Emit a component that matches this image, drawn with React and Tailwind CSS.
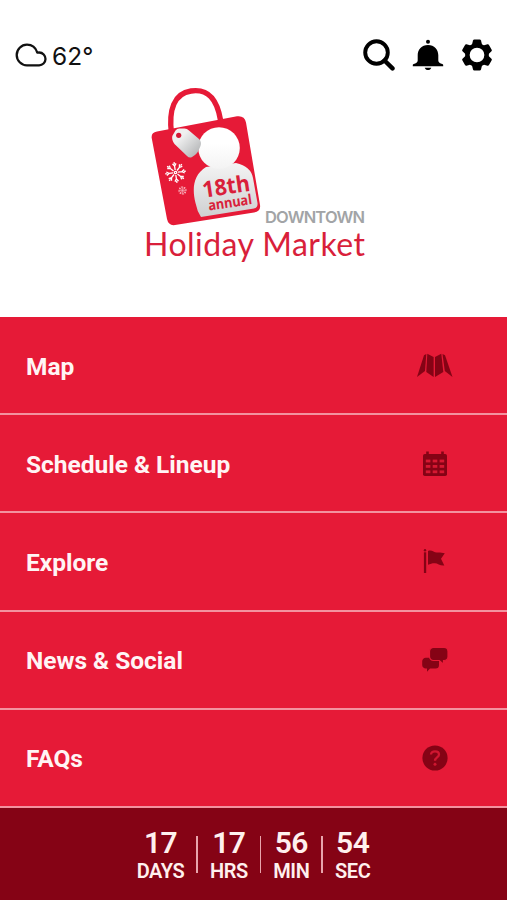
// src/App.jsx
const MENU_ITEMS = [
  { label: 'Map', icon: MapIcon },
  { label: 'Schedule & Lineup', icon: CalendarIcon },
  { label: 'Explore', icon: FlagIcon },
  { label: 'News & Social', icon: ChatIcon },
  { label: 'FAQs', icon: HelpIcon },
];

const COUNTDOWN = [
  { value: 17, unit: 'DAYS' },
  { value: 17, unit: 'HRS' },
  { value: 56, unit: 'MIN' },
  { value: 54, unit: 'SEC' },
];

const GEAR_TEETH = [0, 60, 120, 180, 240, 300];
const SNOW_ARMS = [0, 45, 90, 135, 180, 225, 270, 315];
const CELLS = [0, 1, 2];

function CloudIcon() {
  return (
    <svg className="h-6 w-8" viewBox="0 0 32 24" fill="none" stroke="#111" strokeWidth="2.3" strokeLinejoin="round">
      <path d="M12 22.3h12a6.4 6.4 0 0 0 .2-12.8c-.8 0-1.3 0-1.9.1C20.7 4.7 17 1.7 12 1.7a10.3 10.3 0 0 0 0 20.6Z" />
    </svg>
  );
}

function SearchIcon() {
  return (
    <svg className="size-8" viewBox="0 0 32 32" fill="none" stroke="#000">
      <circle cx="13.5" cy="13.5" r="11.3" strokeWidth="3.9" />
      <path d="m21.5 21.5 8 7.9" strokeWidth="4.4" strokeLinecap="round" />
    </svg>
  );
}

function BellIcon() {
  return (
    <svg className="size-8" viewBox="0 0 32 32">
      <circle cx="16" cy="2.8" r="2" />
      <path d="M16 6c6.3 0 10.3 4.3 10.3 10.3v5.2c0 2 1.8 3 4 3.6.7.2.9.7.9 1.3v.8H.8v-.8c0-.6.2-1.100.9-1.3 2.2-.6 4-1.6 4-3.6v-5.2C5.700 10.3 9.700 6 16 6Z" />
      <path d="M12.7 28.8h6.6c-.6 1.5-1.7 2.3-3.3 2.3s-2.700-.8-3.300-2.300Z" />
    </svg>
  );
}

function GearIcon() {
  return (
    <svg className="size-8" viewBox="0 0 32 32">
      {GEAR_TEETH.map((angle) => (
        <path
          key={angle}
          d="M10.5 7.5 12 1.6q.3-1 1.3-1h5.4q1 0 1.3 1L21.5 7.5Z"
          transform={`rotate(${angle} 16 16)`}
        />
      ))}
      <circle cx="16" cy="16" r="9.6" fill="none" stroke="#000" strokeWidth="4.5" />
    </svg>
  );
}

function MapIcon() {
  return (
    <svg className="h-6 w-9" viewBox="0 0 36 24" fill="#850315">
      <path d="M0 24 7 2.300 9.300 1 8 18Z" />
      <path d="m10.300.8 6.300 3.200V24L9.300 19Z" />
      <path d="M18 4 24.300.8 26.300 19 18 24Z" />
      <path d="m25.500 1 2.500 1.300L35.500 24l-7.700-6Z" />
    </svg>
  );
}

function CalendarIcon() {
  return (
    <svg className="h-[25px] w-6" viewBox="0 0 24 25">
      <rect y="3" width="24" height="22" rx="1.800" fill="#850315" />
      <path d="M4.500.5v4M19.500.5v4" stroke="#850315" strokeWidth="2.600" />
      {CELLS.map((row) =>
        CELLS.map((col) => (
          <rect
            key={`${row}-${col}`}
            x={2.8 + col * 6.9}
            y={8.6 + row * 5.4}
            width="4.600"
            height="2.800"
            fill="#d61832"
          />
        )),
      )}
    </svg>
  );
}

function FlagIcon() {
  return (
    <svg className="h-6 w-6" viewBox="0 0 24 24" fill="#850315">
      <circle cx="2" cy="1.200" r="1.200" />
      <path d="M.9 3.300h2.300V24H.9Z" />
      <path d="M5 2c4-1.600 6 1.800 9 1.500 3-.3 5 .4 7.800.8L18 9.800l3.300 6.700c-4.300.6-6.800-2.600-9.800-2.300-2.300 0-4.500.7-6.500 1.500Z" />
    </svg>
  );
}

function ChatIcon() {
  return (
    <svg className="h-6 w-[26px]" viewBox="0 0 26 24" fill="#850315">
      <path d="M4 9.800h9.500a3.500 3.500 0 0 1 3.500 3.500V17a3.500 3.500 0 0 1-3.500 3.500H8L5 23.800v-3.300H4A3.500 3.500 0 0 1 .2 17v-3.700A3.500 3.500 0 0 1 4 9.800Z" />
      <path
        d="M11.500-.5H22a4 4 0 0 1 4 4v5a4 4 0 0 1-4 4h-.5v3.800L17.300 12.500h-5.800a4 4 0 0 1-4-4v-5a4 4 0 0 1 4-4Z"
        stroke="#e61a37"
        strokeWidth="1.200"
      />
    </svg>
  );
}

function HelpIcon() {
  return (
    <svg className="size-[26px]" viewBox="0 0 26 26">
      <circle cx="13" cy="13" r="12.600" fill="#850315" />
      <path d="M9 9.500c0-2.100 1.700-3.200 4-3.200s4 1.100 4 3.200c0 3-4 2.800-4 6.200" fill="none" stroke="#d01630" strokeWidth="2.300" />
      <circle cx="13" cy="19.200" r="1.500" fill="#d01630" />
    </svg>
  );
}

function Snowflake({ x, y, size }) {
  return (
    <g transform={`translate(${x} ${y}) rotate(-8) scale(${size})`} stroke="#fff" strokeWidth="1.300" fill="none">
      {SNOW_ARMS.map((angle) => (
        <path key={angle} d="M0-2.500v-4M-1.800-9 0-6.500 1.800-9M0-8.500v-2" transform={`rotate(${angle})`} />
      ))}
      <circle r="1.200" />
    </g>
  );
}

function Logo() {
  return (
    <svg className="h-[190px] w-[240px]" viewBox="135 80 240 190">
      <defs>
        <linearGradient id="snow" x1="0" y1="0" x2="0" y2="1">
          <stop offset="0" stopColor="#f4f4f4" />
          <stop offset="1" stopColor="#cfd0d1" />
        </linearGradient>
        <linearGradient id="head" x1="0" y1="0" x2="0" y2="1">
          <stop offset=".4" stopColor="#fff" />
          <stop offset="1" stopColor="#f3f3f3" />
        </linearGradient>
        <linearGradient id="tag" x1="0" y1="0" x2="1" y2="1">
          <stop offset=".3" stopColor="#f0f0f0" />
          <stop offset="1" stopColor="#a9abad" />
        </linearGradient>
      </defs>
      <path d="M171.5 134C168.5 110 174 93.5 191 91S217 99 220.500 120" fill="none" stroke="#e61a37" strokeWidth="5.4" />
      <path
        d="M157 131.5 237 116.3Q244.5 115.3 246 122.5L260 205Q261 211 254 212.5L175 225Q168.5 226 167 219L151.700 138Q151 132.500 157 131.500Z"
        fill="#e61a37"
      />
      <path
        d="M206 167C193 175 192 189 195.500 203Q197 211 201 217L254 208.500Q258 207.500 257.500 203L253 178Q251 166.500 236 163Z"
        fill="url(#snow)"
      />
      <circle cx="219" cy="148" r="20.800" fill="url(#head)" />
      <path
        d="M172.300 136 175.500 130.500Q177 128.300 180 128.500L184.500 128.500Q187 128.700 189 130.500L199 139Q202 142 200.500 146L198.500 150.500Q197 154 192 157Q189.500 158.500 187 156L174.500 144Q171.500 140 172.300 136Z"
        fill="url(#tag)"
      />
      <circle cx="178.700" cy="135.300" r="2.600" fill="#d31835" />
      <Snowflake x={175.5} y={172.5} size={1} />
      <Snowflake x={182.5} y={190.5} size={0.42} />
      <g fill="#d91f3b" transform="rotate(-8.500 205 198)">
        <text x="203.500" y="197.500" fontFamily="Noto Sans, sans-serif" fontWeight="700" fontSize="22.500" textLength="48" lengthAdjust="spacingAndGlyphs">
          18th
        </text>
        <text x="207" y="211" fontFamily="Noto Sans, sans-serif" fontWeight="700" fontSize="14" textLength="44" lengthAdjust="spacingAndGlyphs">
          annual
        </text>
      </g>
      <text x="265" y="223" fill="#a2a4a6" fontFamily="Inter, sans-serif" fontWeight="600" fontSize="16.500" textLength="100" lengthAdjust="spacing">
        DOWNTOWN
      </text>
      <text x="144" y="256" fill="#d91f3b" fontFamily="Lato, sans-serif" fontSize="32" textLength="221" lengthAdjust="spacing">
        Holiday Market
      </text>
    </svg>
  );
}

export default function App() {
  return (
    <div className="flex h-[900px] w-[507px] flex-col overflow-hidden bg-white font-['Roboto',sans-serif]">
      {/* Header */}
      <header className="h-[317px] shrink-0">
        <div className="flex h-20 items-end justify-between pr-[14px] pb-[9px] pl-[15px]">
          <div className="flex h-8 items-center gap-[5px]">
            <CloudIcon />
            <span className="pt-[2px] font-['Inter',sans-serif] text-[24.5px] leading-8 text-[#111]">62°</span>
          </div>
          <div className="flex gap-[17px]">
            <SearchIcon />
            <BellIcon />
            <GearIcon />
          </div>
        </div>
        <div className="pl-[135px]">
          <Logo />
        </div>
      </header>

      {/* Menu */}
      <nav className="grid h-[491px] shrink-0 grid-rows-5 bg-[#e61a37]">
        {MENU_ITEMS.map(({ label, icon: Icon }) => (
          <a key={label} className="flex items-center justify-between border-b-2 border-[#f3929f] pl-[26px]">
            <span className="pt-[3px] text-[24.5px] leading-8 font-bold tracking-[-0.02px] text-[#fff4f4]">{label}</span>
            <span className="flex w-36 items-center justify-center">
              <Icon />
            </span>
          </a>
        ))}
      </nav>

      {/* Countdown */}
      <footer className="flex h-[92px] items-start justify-center bg-[#850315] pt-[19px] text-[#fff0ee]">
        {COUNTDOWN.map(({ value, unit }, index) => (
          <div key={unit} className="flex items-start">
            {index > 0 && <div className="mx-[12px] mt-[9px] h-[37px] w-[1.5px] bg-[#e8a4ac]" />}
            <div className="text-center">
              <div className="text-[30px] leading-[31px] font-semibold tracking-[-0.5px]">{value}</div>
              <div className="text-[20px] leading-[27px] font-semibold tracking-[-0.4px]">{unit}</div>
            </div>
          </div>
        ))}
      </footer>
    </div>
  );
}
